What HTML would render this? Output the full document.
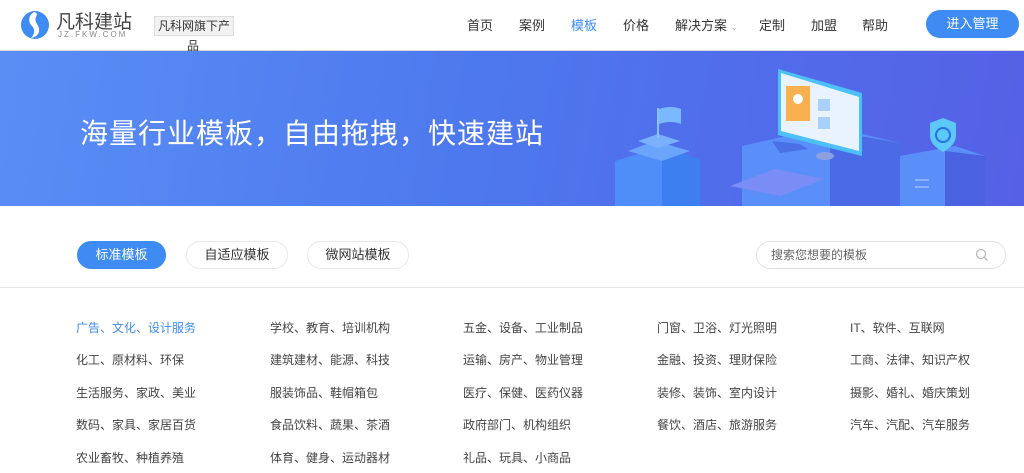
<!DOCTYPE html>
<html><head><meta charset="utf-8"><style>
*{margin:0;padding:0;box-sizing:border-box}
body{width:1024px;height:473px;overflow:hidden;background:#fff;font-family:"Liberation Sans","Noto Sans CJK SC",sans-serif;color:#333;position:relative}
.a{position:absolute;white-space:nowrap}
.hdr{position:absolute;left:0;top:0;width:1024px;height:51px;border-bottom:1px solid #d8d8d8;background:#fff}
.nav{font-size:13px;top:15px;color:#333}
.ban{position:absolute;left:0;top:51px;width:1024px;height:155px;background:linear-gradient(100deg,#5a8ef5 0%,#4d79ee 45%,#5560e6 100%);overflow:hidden}
.tab{position:absolute;top:241px;height:28px;border-radius:14px;border:1px solid #e8e8e8;font-size:13px;line-height:26px;text-align:center;color:#333}
.c{font-size:12px;color:#444;position:absolute;white-space:nowrap}
</style></head><body>
<div class="hdr"></div>
<svg class="a" style="left:20px;top:9px" width="30" height="32" viewBox="0 0 30 32"><circle cx="15" cy="16" r="14" fill="#3d8bf3"/><path d="M14 3c-6 4-6 10-2 14 3 3 3 8-1 12 6-1 9-5 8-10-1-4-5-6-3-11 1-2 2-4-2-5z" fill="#fff"/></svg>
<div class="a" style="left:56px;top:7px;font-size:19px;color:#444">凡科建站</div>
<div class="a" style="left:58px;top:30px;font-size:8px;color:#888;letter-spacing:2px">JZ.FKW.COM</div>
<div class="a" style="left:154px;top:16px;width:80px;height:20px;background:#f2f2f2;border:1px solid #ddd;font-size:12px;line-height:18px;text-align:center;color:#333">凡科网旗下产</div>
<div class="a" style="left:187px;top:37px;font-size:12px;color:#333">品</div>
<div class="a nav" style="left:467px">首页</div>
<div class="a nav" style="left:519px">案例</div>
<div class="a nav" style="left:571px;color:#3d8bf3">模板</div>
<div class="a nav" style="left:623px">价格</div>
<div class="a nav" style="left:675px">解决方案 <span style="font-size:9px;color:#aaa">&#8964;</span></div>
<div class="a nav" style="left:759px">定制</div>
<div class="a nav" style="left:811px">加盟</div>
<div class="a nav" style="left:862px">帮助</div>
<div class="a" style="left:926px;top:10px;width:93px;height:28px;border-radius:14px;background:#3d8bf3;color:#fff;font-size:13px;line-height:28px;text-align:center">进入管理</div>
<div class="ban">
<div class="a" style="left:80px;top:61px;font-size:28px;color:#fff;letter-spacing:1px">海量行业模板，自由拖拽，快速建站</div>
<svg class="a" style="left:600px;top:0" width="424" height="155" viewBox="0 0 424 155">
<polygon points="15,110 65,95 100,110 100,155 15,155" fill="#4f8ef8"/><polygon points="62,97 100,108 100,155 62,155" fill="#3d7ff0"/>
<polygon points="28,100 55,90 90,100 62,110" fill="#6aa4fb"/><polygon points="38,90 58,83 80,90 58,97" fill="#7ab0fc"/>
<rect x="57" y="57" width="2" height="30" fill="#8cc0ff"/><path d="M59 58q12-4 22 0v15q-10-4-22 0z" fill="#7ab8ff"/>
<polygon points="142,95 230,75 300,92 300,155 142,155" fill="#5a8ef8"/><polygon points="230,80 300,92 300,155 230,155" fill="#4a6ae6"/>
<polygon points="130,135 175,118 225,128 180,145" fill="#7a8cf5"/>
<polygon points="178,18 262,42 262,105 178,84" fill="#4dc0f8"/><polygon points="181,22 259,46 259,100 181,80" fill="#e8f3fd"/>
<rect x="186" y="35" width="24" height="35" fill="#f6b14e"/><circle cx="198" cy="48" r="5" fill="#fff"/>
<rect x="218" y="48" width="12" height="12" fill="#a8d0fa"/><rect x="218" y="66" width="12" height="12" fill="#a8d0fa"/>
<polygon points="172,90 200,93 208,98 180,102" fill="#4a70e8"/><ellipse cx="225" cy="105" rx="9" ry="4" fill="#8aa0e0"/>
<polygon points="300,105 355,95 385,105 385,155 300,155" fill="#5a8ef8"/><polygon points="345,100 385,105 385,155 345,155" fill="#4a62e0"/>
<path d="M330 72l13-5 13 5v12c0 8-6 13-13 17-7-4-13-9-13-17z" fill="#5cc8fb"/><circle cx="343" cy="84" r="7" fill="none" stroke="#2a6ee6" stroke-width="2"/>
<rect x="315" y="128" width="14" height="2" fill="#8ab0ff"/><rect x="315" y="135" width="14" height="2" fill="#8ab0ff"/>
</svg>
</div>
<div class="tab" style="left:77px;width:89px;background:#3d8bf3;border-color:#3d8bf3;color:#fff">标准模板</div>
<div class="tab" style="left:186px;width:102px">自适应模板</div>
<div class="tab" style="left:307px;width:102px">微网站模板</div>
<div class="a" style="left:756px;top:241px;width:250px;height:28px;border:1px solid #e2e2e2;border-radius:14px;font-size:12px;color:#666;line-height:26px;padding-left:14px">搜索您想要的模板</div>
<svg class="a" style="left:975px;top:248px" width="14" height="14" viewBox="0 0 14 14"><circle cx="6" cy="6" r="4.5" fill="none" stroke="#bbb" stroke-width="1.3"/><path d="M9.5 9.5l3 3" stroke="#bbb" stroke-width="1.3"/></svg>
<div class="a" style="left:0;top:287px;width:1024px;height:1px;background:#e6e6e6"></div>
<div class="c" style="left:76px;top:319px;color:#3d8bf3">广告、文化、设计服务</div>
<div class="c" style="left:270px;top:319px">学校、教育、培训机构</div>
<div class="c" style="left:463px;top:319px">五金、设备、工业制品</div>
<div class="c" style="left:657px;top:319px">门窗、卫浴、灯光照明</div>
<div class="c" style="left:850px;top:319px">IT、软件、互联网</div>
<div class="c" style="left:76px;top:351px">化工、原材料、环保</div>
<div class="c" style="left:270px;top:351px">建筑建材、能源、科技</div>
<div class="c" style="left:463px;top:351px">运输、房产、物业管理</div>
<div class="c" style="left:657px;top:351px">金融、投资、理财保险</div>
<div class="c" style="left:850px;top:351px">工商、法律、知识产权</div>
<div class="c" style="left:76px;top:384px">生活服务、家政、美业</div>
<div class="c" style="left:270px;top:384px">服装饰品、鞋帽箱包</div>
<div class="c" style="left:463px;top:384px">医疗、保健、医药仪器</div>
<div class="c" style="left:657px;top:384px">装修、装饰、室内设计</div>
<div class="c" style="left:850px;top:384px">摄影、婚礼、婚庆策划</div>
<div class="c" style="left:76px;top:416px">数码、家具、家居百货</div>
<div class="c" style="left:270px;top:416px">食品饮料、蔬果、茶酒</div>
<div class="c" style="left:463px;top:416px">政府部门、机构组织</div>
<div class="c" style="left:657px;top:416px">餐饮、酒店、旅游服务</div>
<div class="c" style="left:850px;top:416px">汽车、汽配、汽车服务</div>
<div class="c" style="left:76px;top:449px">农业畜牧、种植养殖</div>
<div class="c" style="left:270px;top:449px">体育、健身、运动器材</div>
<div class="c" style="left:463px;top:449px">礼品、玩具、小商品</div>
</body></html>
